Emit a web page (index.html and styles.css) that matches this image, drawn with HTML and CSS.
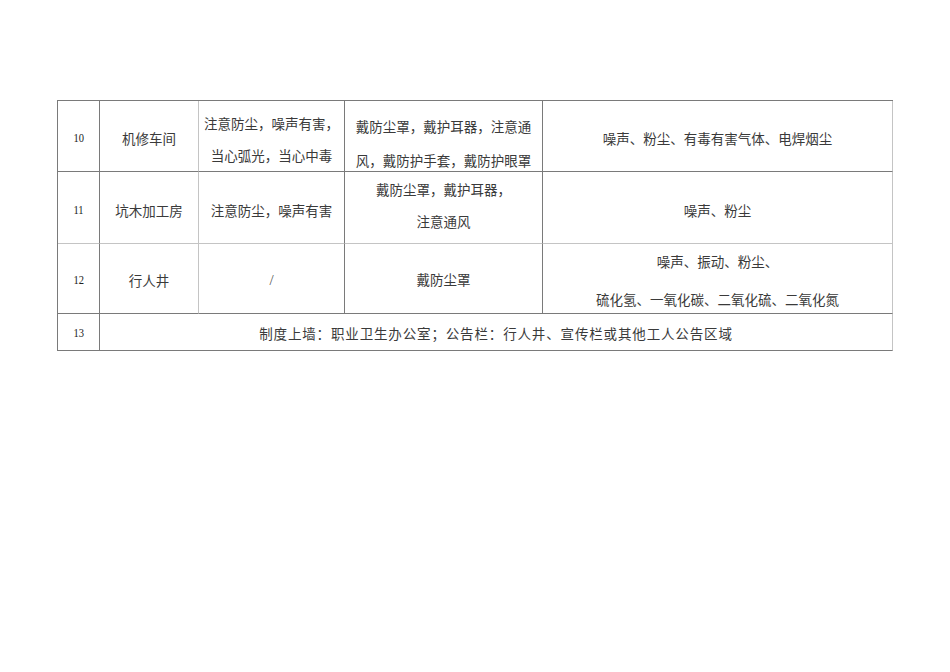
FILE: index.html
```html
<!DOCTYPE html>
<html lang="zh-CN">
<head>
<meta charset="utf-8">
<title>职业卫生警示标识</title>
<link rel="stylesheet" href="styles.css">
</head>
<body>
<div class="page">
  <div class="grid">
    <div class="cell r1 bd-r"><span class="num">10</span></div>
    <div class="cell r1 bd-r-light">机修车间</div>
    <div class="cell r1 bd-r two p6">注意防尘，噪声有害，<br>当心弧光，当心中毒</div>
    <div class="cell r1 bd-r two lh34 p14">戴防尘罩，戴护耳器，注意通<br>风，戴防护手套，戴防护眼罩</div>
    <div class="cell r1 bd-r-light">噪声、粉尘、有毒有害气体、电焊烟尘</div>

    <div class="cell r2 bd-r"><span class="num">11</span></div>
    <div class="cell r2 bd-r-light">坑木加工房</div>
    <div class="cell r2 bd-r">注意防尘，噪声有害</div>
    <div class="cell r2 bd-r two pb5">戴防尘罩，戴护耳器，<br>注意通风</div>
    <div class="cell r2 bd-r-light">噪声、粉尘</div>

    <div class="cell r3 bd-r"><span class="num">12</span></div>
    <div class="cell r3 bd-r-light">行人井</div>
    <div class="cell r3 bd-r"><span class="slash">/</span></div>
    <div class="cell r3 bd-r p0">戴防尘罩</div>
    <div class="cell r3 bd-r-light two lh38">噪声、振动、粉尘、<br>硫化氢、一氧化碳、二氧化硫、二氧化氮</div>

    <div class="cell r4 bd-r"><span class="num">13</span></div>
    <div class="cell r4 bd-r-light span4 wide">制度上墙：职业卫生办公室；公告栏：行人井、宣传栏或其他工人公告区域</div>
  </div>
</div>
</body>
</html>
```
FILE: styles.css
```css
html, body {
  margin: 0;
  padding: 0;
  background: #ffffff;
}

body {
  font-family: "Noto Sans CJK SC", "Noto Sans", sans-serif;
  color: #3a3a3a;
}

.page {
  padding: 100px 0 0 57px;
}

.grid {
  display: grid;
  grid-template-columns: 42px 99px 146px 198px 350px;
  grid-template-rows: 71px 72px 70px 37px;
  width: 835px;
  border-top: 1px solid #7a7a7a;
  border-left: 1px solid #7a7a7a;
}

.cell {
  box-sizing: border-box;
  display: flex;
  align-items: center;
  justify-content: center;
  text-align: center;
  font-size: 13.5px;
  line-height: 18px;
  white-space: nowrap;
  border-right: 1px solid #7a7a7a;
  border-bottom: 1px solid #7a7a7a;
}

.bd-r { border-right-color: #7a7a7a; }
.bd-r-light { border-right-color: #c4c4c4; }

.r1 { padding-top: 4px; border-bottom-color: #7a7a7a; }
.r2 { padding-top: 5px; border-bottom-color: #c4c4c4; }
.r3 { padding-top: 3px; border-bottom-color: #7a7a7a; }
.r4 { padding-top: 2px; border-bottom-color: #7a7a7a; }

.two { line-height: 32px; }
.lh34 { line-height: 34px; }
.lh38 { line-height: 38px; }
.p6 { padding-top: 6px; }
.p14 { padding-top: 14px; }
.p0 { padding-top: 0; }
.pb5 { padding-top: 0; padding-bottom: 5px; }

.span4 { grid-column: 2 / 6; }
.wide { letter-spacing: 0.85px; }

.num {
  display: inline-block;
  font-family: "Liberation Serif", "Times New Roman", serif;
  font-size: 13.5px;
  transform: scaleX(0.78);
  color: #222222;
}

.slash {
  font-family: "Liberation Serif", serif;
  font-size: 15px;
  color: #555555;
}
```
